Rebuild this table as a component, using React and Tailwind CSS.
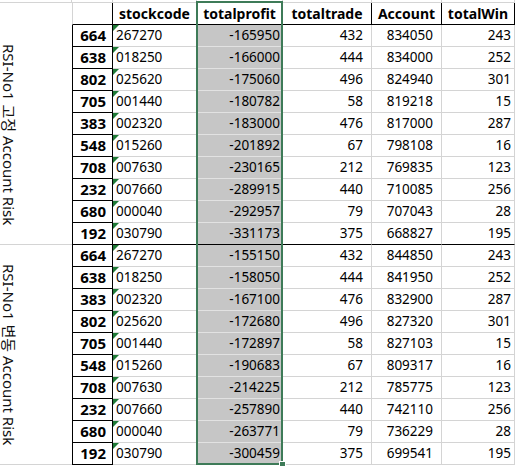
import React from "react";

const g1 = [
  ["664", "267270", "-165950", "432", "834050", "243"],
  ["638", "018250", "-166000", "444", "834000", "252"],
  ["802", "025620", "-175060", "496", "824940", "301"],
  ["705", "001440", "-180782", "58", "819218", "15"],
  ["383", "002320", "-183000", "476", "817000", "287"],
  ["548", "015260", "-201892", "67", "798108", "16"],
  ["708", "007630", "-230165", "212", "769835", "123"],
  ["232", "007660", "-289915", "440", "710085", "256"],
  ["680", "000040", "-292957", "79", "707043", "28"],
  ["192", "030790", "-331173", "375", "668827", "195"],
];
const g2 = [
  ["664", "267270", "-155150", "432", "844850", "243"],
  ["638", "018250", "-158050", "444", "841950", "252"],
  ["383", "002320", "-167100", "476", "832900", "287"],
  ["802", "025620", "-172680", "496", "827320", "301"],
  ["705", "001440", "-172897", "58", "827103", "15"],
  ["548", "015260", "-190683", "67", "809317", "16"],
  ["708", "007630", "-214225", "212", "785775", "123"],
  ["232", "007660", "-257890", "440", "742110", "256"],
  ["680", "000040", "-263771", "79", "736229", "28"],
  ["192", "030790", "-300459", "375", "699541", "195"],
];

const font = { fontFamily: '"Noto Sans", "Noto Sans CJK KR", sans-serif' };

function Label({ text, rowStart }) {
  return (
    <div
      className={`${rowStart} row-span-10 col-start-1 flex items-center justify-start pl-[1px] border-b border-[#d4d4d4]`}
    >
      <span className="[writing-mode:vertical-rl] [text-orientation:sideways] text-[15px] leading-[15px] text-[#111] whitespace-nowrap">
        {text}
      </span>
    </div>
  );
}

function DataRow({ row, sep }) {
  const b = sep ? "border-b-black" : "border-b-[#d4d4d4]";
  return (
    <>
      <div className="col-start-2 border-l border-r border-b border-black flex items-center justify-end pr-[6px] font-bold text-[15px]">
        {row[0]}
      </div>
      <div className={`relative border-r border-b border-r-[#d4d4d4] ${b} flex items-center pl-[3px] text-[13.5px]`}>
        <span className="absolute left-0 top-0 w-0 h-0 border-t-[6px] border-r-[6px] border-t-[#1f7a36] border-r-transparent" />
        {row[1]}
      </div>
      <div className={`bg-[#c6c6c6] border-b ${sep ? "border-b-black" : "border-b-[#e2e2e2]"} flex items-center justify-end pr-[3px] text-[13.5px]`}>
        {row[2]}
      </div>
      <div className={`border-r border-b border-r-[#d4d4d4] ${b} flex items-center justify-end pr-[8px] text-[13.5px]`}>
        {row[3]}
      </div>
      <div className={`border-r border-b border-r-[#d4d4d4] ${b} flex items-center justify-end pr-[8px] text-[13.5px]`}>
        {row[4]}
      </div>
      <div className={`border-r border-b border-r-[#d4d4d4] ${b} flex items-center justify-end pr-[3px] text-[13.5px]`}>
        {row[5]}
      </div>
    </>
  );
}

export default function App() {
  const headers = ["stockcode", "totalprofit", "totaltrade", "Account", "totalWin"];
  return (
    <div className="relative w-[515px] h-[466px] overflow-hidden bg-white text-black" style={font}>
      <div className="grid grid-cols-[72px_41px_84px_86px_89px_70px_73px] grid-rows-[3px_22px_repeat(20,22px)]">
        {[0, 1, 2, 3, 4, 5, 6].map((i) => (
          <div key={"r0" + i} className="border-b border-r border-[#d4d4d4]" />
        ))}
        <div />
        <div className="border-l border-l-[#d4d4d4] border-r border-r-black border-b border-b-black" />
        {headers.map((h) => (
          <div
            key={h}
            className="border-r border-b border-black flex items-center justify-center font-bold text-[14px]"
          >
            {h}
          </div>
        ))}
        <Label text="RSI-No1 고정 Account Risk" rowStart="row-start-3" />
        <Label text="RSI-No1 변동 Account Risk" rowStart="row-start-13" />
        {g1.map((r, i) => (
          <DataRow key={"a" + i} row={r} sep={i === 9} />
        ))}
        {g2.map((r, i) => (
          <DataRow key={"b" + i} row={r} sep={false} />
        ))}
      </div>
      <div className="absolute left-[196px] top-[1px] w-[87px] h-[464px] border-2 border-[#3e7b58] pointer-events-none" />
      <div className="absolute left-[279px] top-[461px] w-[7px] h-[7px] bg-[#3e7b58] border border-white pointer-events-none" />
    </div>
  );
}
